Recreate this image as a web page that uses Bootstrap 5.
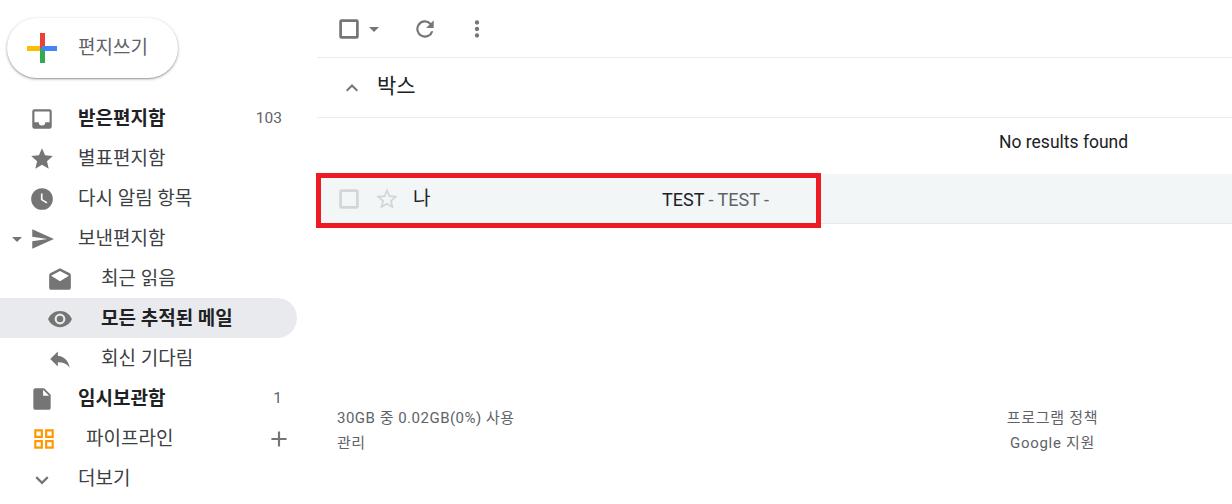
<!DOCTYPE html>
<html lang="ko">

<head>
    <meta charset="UTF-8">
    <meta name="viewport" content="width=device-width, initial-scale=1.0">
    <title>Gmail</title>
    <link href="https://cdn.jsdelivr.net/npm/bootstrap@5.3.0/dist/css/bootstrap.min.css" rel="stylesheet">
    <style>
        html, body {
            height: 504px;
            overflow: hidden;
        }

        body {
            font-family: Roboto, "Noto Sans CJK KR", sans-serif;
            font-size: 19px;
            color: #202124;
            background: #fff;
        }

        .side-pane {
            width: 317px;
            flex: none;
        }

        .compose-wrap {
            height: 98px;
            padding: 18px 0 0 7px;
        }

        .compose-btn {
            width: 171px;
            height: 60px;
            border-radius: 30px;
            background: #fff;
            box-shadow: 0 1px 3px rgba(60, 64, 67, .45), 0 1px 1px rgba(60, 64, 67, .2);
            padding-left: 19px;
            color: #5f6368;
            font-size: 19px;
        }

        .compose-btn span {
            margin-left: 20px;
        }

        .nav-line {
            height: 40px;
            width: 297px;
            padding-top: 2px;
            border-radius: 0 20px 20px 0;
            color: #3c4043;
            position: relative;
        }

        .nav-line.is-on {
            background: #e8eaed;
            color: #202124;
        }

        .nav-line.is-bold {
            font-weight: 700;
            color: #202124;
        }

        .nav-ico {
            width: 26px;
            height: 26px;
            fill: #757575;
            flex: none;
            margin-left: 29px;
        }

        .nav-label {
            margin-left: 23px;
        }

        .nav-line.is-sub .nav-ico {
            margin-left: 47px;
        }

        .nav-line.is-sub .nav-label {
            margin-left: 28px;
        }

        .nav-line.is-app .nav-ico {
            margin-left: 31px;
        }

        .nav-line.is-app .nav-label {
            margin-left: 29px;
        }

        .nav-count {
            margin-left: auto;
            padding-right: 15px;
            font-size: 15.5px;
            font-weight: 400;
            color: #5f6368;
        }

        .drop-mark {
            position: absolute;
            left: 12px;
            top: 19px;
            border: 5px solid transparent;
            border-top-color: #757575;
            border-bottom: 0;
        }

        .plus-ico {
            margin-left: auto;
            margin-right: 5px;
            fill: #757575;
        }

        .tool-bar {
            height: 58px;
            padding-left: 19px;
            border-bottom: 1px solid #ebebeb;
        }

        .tool-bar svg {
            fill: #757575;
            flex: none;
        }

        .tool-refresh {
            margin-left: 30px;
        }

        .tool-more {
            margin-left: 26px;
        }

        .box-head {
            height: 60px;
            border-bottom: 1px solid #ebebeb;
            padding-left: 23px;
            padding-bottom: 2px;
            font-size: 21px;
        }

        .box-head svg {
            fill: #757575;
            margin-right: 13px;
        }

        .empty-note {
            height: 56px;
            padding-left: 682px;
            padding-bottom: 7px;
            font-size: 17.5px;
        }

        .mail-line {
            height: 50px;
            padding-top: 1px;
            background: #f2f6f7;
            border-bottom: 1px solid #e6e8ea;
            padding-left: 19px;
            position: relative;
        }

        .mail-line .tick {
            width: 26px;
            height: 26px;
            fill: #d3d6d8;
            flex: none;
        }

        .mail-line .star-ico {
            width: 26px;
            height: 26px;
            margin-left: 12px;
            fill: #d3d6d8;
            flex: none;
        }

        .mail-from {
            width: 249px;
            margin-left: 13px;
            flex: none;
        }

        .mail-snip {
            color: #5f6368;
            font-size: 18px;
        }

        .mail-snip b {
            font-weight: 400;
            color: #202124;
        }

        .red-frame {
            position: absolute;
            left: -1px;
            top: -1px;
            width: 505px;
            height: 55px;
            border: 5px solid #ed1c24;
            pointer-events: none;
        }

        .foot-zone {
            padding: 0 0 0 20px;
            margin-top: 183px;
            font-size: 15px;
            color: #5f6368;
            letter-spacing: .5px;
        }

        .foot-zone div div {
            height: 25px;
        }

        .foot-right {
            width: 229px;
            text-align: center;
            margin-left: auto;
            margin-right: 65px;
            letter-spacing: .7px;
        }
    </style>
</head>

<body>
    <div class="d-flex">
        <div class="side-pane">
            <div class="compose-wrap">
                <div class="compose-btn d-flex align-items-center">
                    <svg width="32" height="32" viewBox="0 0 32 32">
                        <rect x="14" y="1" width="5" height="15" fill="#ea4335"/>
                        <rect x="14" y="16" width="5" height="15" fill="#34a853"/>
                        <rect x="1" y="14" width="13" height="5" fill="#fbbc04"/>
                        <rect x="16" y="14" width="15" height="5" fill="#4285f4"/>
                    </svg>
                    <span>편지쓰기</span>
                </div>
            </div>

            <div class="nav-line is-bold d-flex align-items-center">
                <svg class="nav-ico" viewBox="0 0 24 24"><path d="M19 3H5a2 2 0 0 0-2 2v14a2 2 0 0 0 2 2h14a2 2 0 0 0 2-2V5a2 2 0 0 0-2-2zm0 12h-4a3 3 0 0 1-6 0H5V5h14z"/></svg>
                <span class="nav-label">받은편지함</span>
                <span class="nav-count">103</span>
            </div>
            <div class="nav-line d-flex align-items-center">
                <svg class="nav-ico" viewBox="0 0 24 24"><path d="M12 17.3l6.2 3.7-1.6-7L22 9.2l-7.2-.6L12 2 9.2 8.6 2 9.2 7.5 14l-1.7 7z"/></svg>
                <span class="nav-label">별표편지함</span>
            </div>
            <div class="nav-line d-flex align-items-center">
                <svg class="nav-ico" viewBox="0 0 24 24"><path d="M12 2a10 10 0 1 0 0 20 10 10 0 0 0 0-20zm4.2 14.2L11 13V7h1.5v5.2l4.5 2.7z"/></svg>
                <span class="nav-label">다시 알림 항목</span>
            </div>
            <div class="nav-line d-flex align-items-center">
                <span class="drop-mark"></span>
                <svg class="nav-ico" viewBox="0 0 24 24"><path d="M3 21l20-9L3 3v7l14 2-14 2z"/></svg>
                <span class="nav-label">보낸편지함</span>
            </div>
            <div class="nav-line is-sub d-flex align-items-center">
                <svg class="nav-ico" viewBox="0 0 24 24"><path d="M22 8.5c0-.7-.4-1.3-.9-1.700L12 2 2.900 6.800C2.400 7.200 2 7.800 2 8.500V20a2 2 0 0 0 2 2h16a2 2 0 0 0 2-2zM12 14L3.800 8.900 12 4.500l8.200 4.400z"/></svg>
                <span class="nav-label">최근 읽음</span>
            </div>
            <div class="nav-line is-sub is-on is-bold d-flex align-items-center">
                <svg class="nav-ico" viewBox="0 0 24 24"><path d="M12 4.500C7 4.500 2.700 7.600 1 12c1.700 4.400 6 7.500 11 7.500s9.300-3.100 11-7.500c-1.700-4.400-6-7.500-11-7.500zM12 17a5 5 0 1 1 0-10 5 5 0 0 1 0 10zm0-8a3 3 0 1 0 0 6 3 3 0 0 0 0-6z"/></svg>
                <span class="nav-label">모든 추적된 메일</span>
            </div>
            <div class="nav-line is-sub d-flex align-items-center">
                <svg class="nav-ico" viewBox="0 0 24 24"><path d="M10 9V5l-7 7 7 7v-4.100c5 0 8.500 1.600 11 5.100-1-5-4-10-11-11z"/></svg>
                <span class="nav-label">회신 기다림</span>
            </div>
            <div class="nav-line is-bold d-flex align-items-center">
                <svg class="nav-ico" viewBox="0 0 24 24"><path d="M14 2H6a2 2 0 0 0-2 2v16a2 2 0 0 0 2 2h12a2 2 0 0 0 2-2V8zm-1 7V3.500L18.500 9z"/></svg>
                <span class="nav-label">임시보관함</span>
                <span class="nav-count">1</span>
            </div>
            <div class="nav-line is-app d-flex align-items-center">
                <svg class="nav-ico" viewBox="0 0 24 24">
                    <path fill="#ff9800" fill-rule="evenodd" d="M3 3h8v8H3zm2 2v4h4V5zM13 3h8v8h-8zm2 2v4h4V5zM3 13h8v8H3zm2 2v4h4v-4zM13 13h8v8h-8zm2 2v4h4v-4z"/>
                </svg>
                <span class="nav-label">파이프라인</span>
                <svg class="plus-ico" width="26" height="26" viewBox="0 0 24 24"><path d="M19 13h-6v6h-2v-6H5v-2h6V5h2v6h6z"/></svg>
            </div>
            <div class="nav-line d-flex align-items-center">
                <svg class="nav-ico" viewBox="0 0 24 24"><path d="M7.400 9.500L12 14.100l4.600-4.600L18 11l-6 6-6-6z"/></svg>
                <span class="nav-label">더보기</span>
            </div>
        </div>

        <div class="flex-grow-1">
            <div class="tool-bar d-flex align-items-center">
                <svg width="26" height="26" viewBox="0 0 24 24"><path fill-rule="evenodd" d="M19 3H5a2 2 0 0 0-2 2v14a2 2 0 0 0 2 2h14a2 2 0 0 0 2-2V5a2 2 0 0 0-2-2zM18.500 18.500H5.500V5.500h13z"/></svg>
                <svg class="ms-1" width="16" height="24" viewBox="0 0 16 24"><path d="M3 10l5 5 5-5z"/></svg>
                <svg class="tool-refresh" width="26" height="26" viewBox="0 0 24 24"><path d="M17.650 6.350A8 8 0 1 0 19.700 14h-2.100a6 6 0 1 1-1.400-6.200L13 11h7V4z"/></svg>
                <svg class="tool-more" width="26" height="26" viewBox="0 0 24 24"><path d="M12 8a2 2 0 1 0 0-4 2 2 0 0 0 0 4zm0 2a2 2 0 1 0 0 4 2 2 0 0 0 0-4zm0 6a2 2 0 1 0 0 4 2 2 0 0 0 0-4z"/></svg>
            </div>
            <div class="box-head d-flex align-items-center">
                <svg width="24" height="24" viewBox="0 0 24 24"><path d="M7.400 16.500L12 11.900l4.600 4.600L18 15l-6-6-6 6z"/></svg>
                <span>박스</span>
            </div>
            <div class="empty-note d-flex align-items-center">No results found</div>
            <div class="mail-line d-flex align-items-center">
                <svg class="tick" viewBox="0 0 24 24"><path fill-rule="evenodd" d="M19 3H5a2 2 0 0 0-2 2v14a2 2 0 0 0 2 2h14a2 2 0 0 0 2-2V5a2 2 0 0 0-2-2zM18.500 18.500H5.500V5.500h13z"/></svg>
                <svg class="star-ico" viewBox="0 0 24 24"><path d="M22 9.200l-7.200-.6L12 2 9.200 8.600 2 9.200 7.500 14l-1.700 7 6.200-3.700 6.200 3.700-1.600-7zM12 15.400l-3.800 2.300 1-4.300-3.300-2.900 4.400-.4L12 6.100l1.700 4 4.400.4-3.300 2.900 1 4.300z"/></svg>
                <span class="mail-from">나</span>
                <span class="mail-snip"><b>TEST</b> - TEST -</span>
                <div class="red-frame"></div>
            </div>
            <div class="foot-zone d-flex">
                <div>
                    <div>30GB 중 0.02GB(0%) 사용</div>
                    <div>관리</div>
                </div>
                <div class="foot-right">
                    <div>프로그램 정책</div>
                    <div>Google 지원</div>
                </div>
            </div>
        </div>
    </div>

    <script src="https://cdn.jsdelivr.net/npm/bootstrap@5.3.0/dist/js/bootstrap.bundle.min.js"></script>
</body>

</html>
